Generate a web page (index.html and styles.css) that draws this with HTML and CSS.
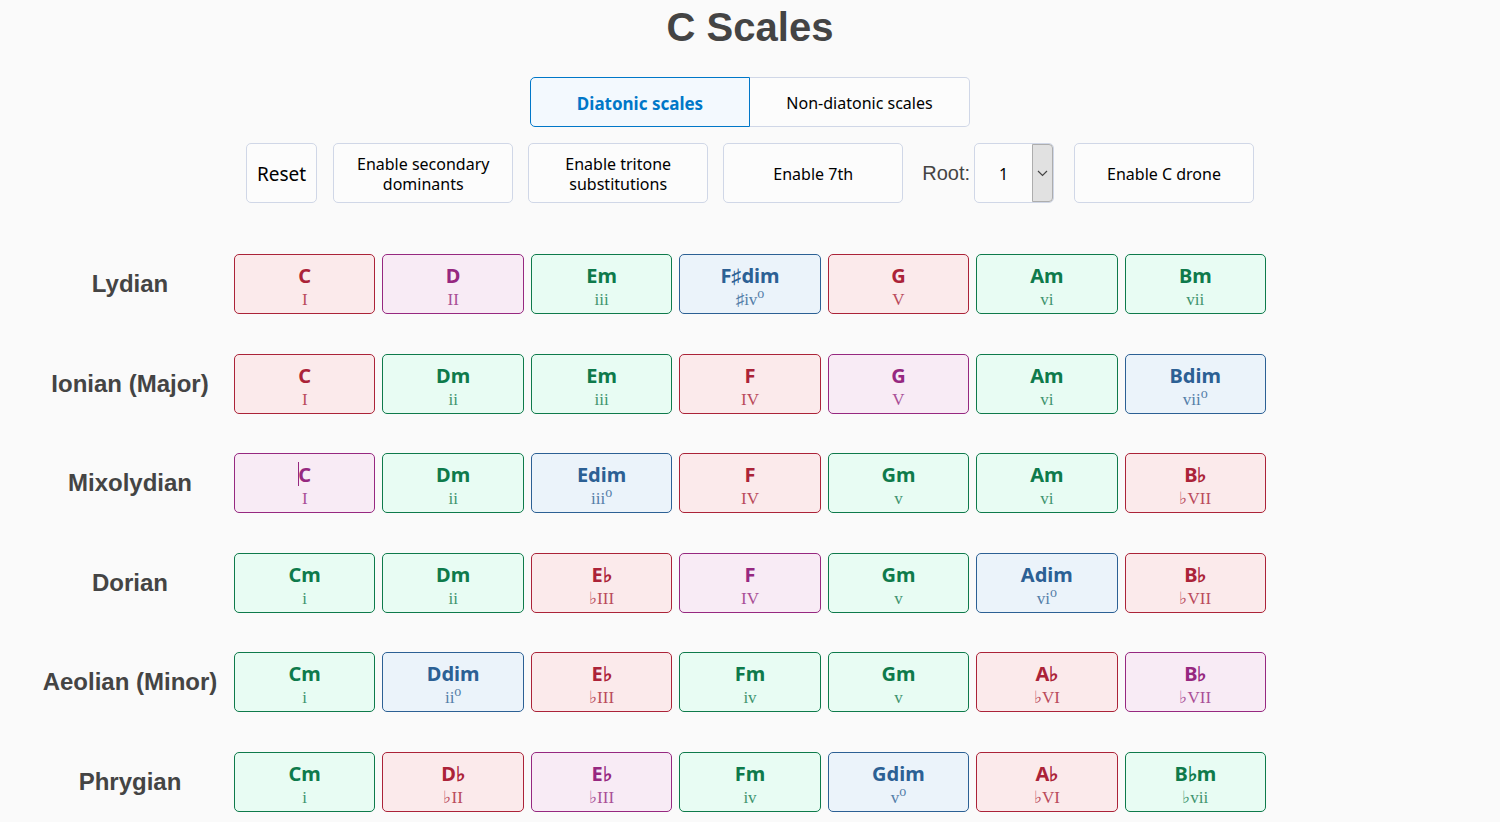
FILE: index.html
```html
<!DOCTYPE html>
<html lang="en">
<head>
<meta charset="utf-8">
<title>C Scales</title>
<link rel="stylesheet" href="styles.css">
</head>
<body>
<header class="header">
  <h1 class="title">C Scales</h1>
  <div class="tabs">
    <button class="tab tab-active" type="button" aria-pressed="true">Diatonic scales</button>
    <button class="tab" type="button" aria-pressed="false">Non-diatonic scales</button>
  </div>
  <div class="controls">
    <button class="control reset" type="button">Reset</button>
    <button class="control option" type="button">Enable secondary dominants</button>
    <button class="control option" type="button">Enable tritone substitutions</button>
    <button class="control option" type="button">Enable 7th</button>
    <div class="root">
      <label for="root">Root:</label>
      <div class="select-wrap">
        <select class="control select" id="root"><option>1</option><option>2</option><option>3</option></select>
        <span class="select-arrow"><svg width="11" height="7" viewBox="0 0 11 7"><path d="M1 1l4.500 4.500L10 1" fill="none" stroke="#444" stroke-width="1.200"/></svg></span>
      </div>
    </div>
    <button class="control option" type="button">Enable C drone</button>
  </div>
</header>
<main class="scales" id="scales"></main>
<script src="scales.js"></script>
</body>
</html>
```
FILE: styles.css
```css
* { box-sizing: border-box; }
body {
  display: flex;
  flex-direction: column;
  min-height: 100vh;
  margin: 0;
  padding-bottom: 10px;
  background: #fafafa;
  color: #444;
  font-family: "Liberation Sans", Arial, sans-serif;
}
button, select { font-family: "Noto Sans", Tahoma, sans-serif; color: #000; }
.header { display: flex; flex-direction: column; align-items: center; }
.title { margin: 4px 0 27px; font-size: 40px; line-height: 46px; }
.tabs { display: flex; margin-bottom: 16px; }
.tab {
  width: 220px;
  height: 50px;
  padding: 2px 0 0;
  border: 1px solid #d0d7e7;
  border-left-width: 0;
  border-radius: 0 5px 5px 0;
  background: #fcfcfc;
  font-size: 16px;
}
.tab-active {
  border: 1px solid #0077c8;
  border-radius: 5px 0 0 5px;
  background: #f3f9fe;
  color: #0077c8;
  font-size: 17px;
  font-weight: bold;
}
.controls { display: flex; justify-content: center; gap: 15px; }
.control {
  height: 60px;
  border: 1px solid #d0d7e7;
  border-radius: 5px;
  background: #fcfcfc;
  font-size: 16px;
  line-height: 20px;
}
.reset { margin-right: 1px; padding: 2px 10px 0; font-size: 19px; }
.option { width: 180px; padding: 2px 20px 0; }
.root { display: flex; align-items: center; gap: 4px; margin: 0 5px 0 4px; font-size: 20px; }
.select-wrap { position: relative; }
.select { display: block; width: 80px; padding: 2px 24px 0; appearance: none; }
.select-arrow {
  position: absolute;
  top: 1px;
  right: 1px;
  bottom: 1px;
  display: grid;
  place-items: center;
  width: 21px;
  border: 1px solid #adadad;
  border-radius: 0 4px 4px 0;
  background: #e1e1e1;
  pointer-events: none;
}
.scales {
  display: flex;
  flex: 1;
  flex-direction: column;
  justify-content: space-between;
  gap: 24px;
  padding-top: 51px;
}
.scale { display: grid; grid-template-columns: minmax(200px, 1fr) minmax(0, 1032px) 1fr; align-items: center; }
.scale-name { margin: 0; padding-left: 26px; font-size: 24px; line-height: 28px; text-align: center; }
.chords { display: grid; grid-template-columns: repeat(7, 1fr); gap: 7px; }
.chord {
  display: flex;
  flex-direction: column;
  align-items: center;
  justify-content: center;
  height: 60px;
  padding: 6px 0 0;
  border: 1px solid;
  border-radius: 5px;
}
.major { background: #fbeaeb; color: #ab2338; }
.minor { background: #e8fcf3; color: #0e7a4b; }
.dim { background: #ebf3fa; color: #2c6094; }
.dominant { background: #f8ebf5; color: #962880; }
.name { position: relative; font-size: 20px; font-weight: bold; line-height: 26px; }
.caret::before {
  content: "";
  position: absolute;
  top: 0;
  left: 0;
  width: 1px;
  height: 24px;
  background: currentColor;
}
.degree { font-family: "Liberation Serif", serif; font-size: 17px; line-height: 22px; opacity: 0.800; }
.degree sup { font-size: 14px; line-height: 0; }
```
FILE: scales.js
```js
const scales = [
  ["Lydian", "C:I:major D:II:dominant Em:iii:minor F♯dim:♯ivº:dim G:V:major Am:vi:minor Bm:vii:minor"],
  ["Ionian (Major)", "C:I:major Dm:ii:minor Em:iii:minor F:IV:major G:V:dominant Am:vi:minor Bdim:viiº:dim"],
  ["Mixolydian", "C:I:dominant:caret Dm:ii:minor Edim:iiiº:dim F:IV:major Gm:v:minor Am:vi:minor B♭:♭VII:major"],
  ["Dorian", "Cm:i:minor Dm:ii:minor E♭:♭III:major F:IV:dominant Gm:v:minor Adim:viº:dim B♭:♭VII:major"],
  ["Aeolian (Minor)", "Cm:i:minor Ddim:iiº:dim E♭:♭III:major Fm:iv:minor Gm:v:minor A♭:♭VI:major B♭:♭VII:dominant"],
  ["Phrygian", "Cm:i:minor D♭:♭II:major E♭:♭III:dominant Fm:iv:minor Gdim:vº:dim A♭:♭VI:major B♭m:♭vii:minor"],
];

const chordButton = (chord) => {
  const [name, degree, kind, extra = ""] = chord.split(":");
  return `<button type="button" class="chord ${kind}"><span class="name ${extra}">${name}</span><span class="degree">${degree.replace("º", "<sup>o</sup>")}</span></button>`;
};

document.getElementById("scales").innerHTML = scales
  .map(([name, chords]) => `<section class="scale"><h2 class="scale-name">${name}</h2><div class="chords">${chords.split(" ").map(chordButton).join("")}</div></section>`)
  .join("");
```
